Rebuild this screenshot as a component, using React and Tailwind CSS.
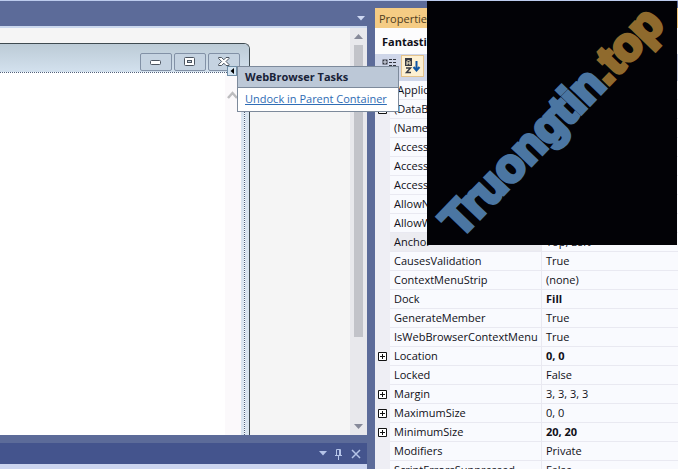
import React from "react";

const rows = [
  ["(ApplicationSettings)", "", "plus"],
  ["(DataBindings)", "", "plus"],
  ["(Name)", "webBrowser1"],
  ["AccessibleDescription", ""],
  ["AccessibleName", ""],
  ["AccessibleRole", "Default"],
  ["AllowNavigation", "True"],
  ["AllowWebBrowserDrop", "True"],
  ["Anchor", "Top, Left", "selected"],
  ["CausesValidation", "True"],
  ["ContextMenuStrip", "(none)"],
  ["Dock", "Fill", "bold"],
  ["GenerateMember", "True"],
  ["IsWebBrowserContextMenu", "True"],
  ["Location", "0, 0", "plus bold"],
  ["Locked", "False"],
  ["Margin", "3, 3, 3, 3", "plus"],
  ["MaximumSize", "0, 0", "plus"],
  ["MinimumSize", "20, 20", "plus bold"],
  ["Modifiers", "Private"],
  ["ScriptErrorsSuppressed", "False"],
];

function CaptionButton({ label, children }) {
  return (
    <button
      aria-label={label}
      className="flex h-[18px] w-8 items-center justify-center rounded-[2px] border border-[#8291a6] bg-[#c5d3e1]"
    >
      {children}
    </button>
  );
}

function FormWindow() {
  return (
    <div className="flex h-full w-[250px] flex-col overflow-hidden rounded-tr-[6px] border-t border-r border-[#3e4a50] bg-[#d9e5f0]">
      <div className="flex h-7 shrink-0 items-end justify-end gap-[2px] bg-linear-to-b from-[#bccbd6] to-[#d3e1ee] pr-[9px] pb-px">
        <CaptionButton label="Minimize">
          <svg width="12" height="6" viewBox="0 0 12 6" className="mt-[2px]">
            <rect x="0.5" y="0.5" width="10" height="4" rx="1" fill="#fff" stroke="#4c5560" />
          </svg>
        </CaptionButton>
        <CaptionButton label="Maximize">
          <svg width="12" height="10" viewBox="0 0 12 10">
            <rect x="0.5" y="0.5" width="10" height="8" rx="1" fill="#fff" stroke="#4c5560" />
            <rect x="3.5" y="3.5" width="4" height="2" fill="#c5d3e1" stroke="#4c5560" />
          </svg>
        </CaptionButton>
        <CaptionButton label="Close">
          <svg width="12" height="10" viewBox="0 0 12 10">
            <path
              d="M.6.5h3l2.200 2.300L8 .5h3v1L8 4.500l3 3v1H8L5.800 6.200 3.600 8.500h-3v-1l3-3-3-3z"
              fill="#fff"
              stroke="#4c5560"
            />
          </svg>
        </CaptionButton>
      </div>
      <div className="flex min-h-0 flex-1 pr-[4px]">
        <div className="flex min-w-0 flex-1 border-t border-r border-dotted border-[#51617c] bg-white">
          <div className="flex-1" />
          <div className="w-[16px] bg-[#fbf9fb] pt-[17px]">
            <svg width="14" height="10" viewBox="0 0 14 10" className="ml-[2px]">
              <path d="M1 8 5.500 3 10 8" fill="none" stroke="#bdbdbf" strokeWidth="2.500" />
            </svg>
          </div>
          <div className="w-[3px] bg-[#d9e5f0]" />
        </div>
      </div>
    </div>
  );
}

function Designer() {
  return (
    <div className="flex min-h-0 flex-1 border-t-2 border-[#cbd8ee] bg-[#f5f5f5]">
      <div className="min-w-0 flex-1 pt-[15px]">
        <FormWindow />
      </div>
      <div className="flex w-[17px] shrink-0 flex-col items-center bg-[#e8e8ec]">
        <svg width="9" height="5" viewBox="0 0 9 5" className="mt-[6px]">
          <path d="M4.500 0 9 5H0z" fill="#868999" />
        </svg>
        <div className="mt-[6px] h-[292px] w-[9px] bg-[#c2c3c9]" />
        <svg width="9" height="5" viewBox="0 0 9 5" className="mt-auto mb-[6px]">
          <path d="M0 0h9L4.500 5z" fill="#868999" />
        </svg>
      </div>
    </div>
  );
}

function TasksPopup() {
  return (
    <div className="absolute top-[65px] left-[237px] w-[162px] border border-[#7d8a9b] bg-white">
      <div className="h-[21px] border-b border-[#7d8a9b] bg-[#bcc8d7] pl-[7px] text-[11px] leading-5 font-bold text-[#182238]">
        WebBrowser Tasks
      </div>
      <div className="h-[23px] pl-[7px] text-[11px] leading-[22px] whitespace-nowrap">
        <a href="#undock" className="text-[#2f6db5] underline">
          Undock in Parent Container
        </a>
      </div>
      <button
        aria-label="Close tasks"
        className="absolute top-[-1px] left-[-11px] flex h-[10px] w-[10px] items-center justify-center border border-[#7290a8] bg-[#d5e5f2]"
      >
        <svg width="5" height="6" viewBox="0 0 5 6" className="shrink-0">
          <path d="M4 0v6L.500 3z" fill="#000" />
        </svg>
      </button>
    </div>
  );
}

function ToolWindowBar() {
  return (
    <div className="flex h-[21px] shrink-0 items-center justify-end gap-2 bg-[#44548d] pr-[6px] text-[#b5c4e8]">
      <button aria-label="Window position">
        <svg width="8" height="5" viewBox="0 0 8 5">
          <path d="M0 0h8L4 4.500z" fill="currentColor" />
        </svg>
      </button>
      <button aria-label="Auto hide">
        <svg width="8" height="12" viewBox="0 0 8 12">
          <path d="M1.500 7V1.500h4V7M4.500 1.500V7M0 7.500h7M3.500 8v4" fill="none" stroke="currentColor" />
        </svg>
      </button>
      <button aria-label="Close">
        <svg width="10" height="10" viewBox="0 0 10 10">
          <path d="m1 1 8 8M9 1 1 9" stroke="currentColor" strokeWidth="1.500" />
        </svg>
      </button>
    </div>
  );
}

function ExpandButton({ label }) {
  return (
    <button aria-label={"Expand " + label}>
      <svg width="9" height="9" viewBox="0 0 9 9">
        <path d="M.5.5h8v8h-8zM2 4.500h5M4.500 2v5" fill="#fff" stroke="#111" />
      </svg>
    </button>
  );
}

function PropertyTable() {
  return (
    <table className="w-full table-fixed border-collapse text-[11px] text-[#101018]">
      <colgroup>
        <col className="w-[15px]" />
        <col className="w-[152px]" />
        <col />
      </colgroup>
      <tbody>
        {rows.map(([name, value, kind = ""]) => (
          <tr key={name} className="h-[19px]">
            <td className="bg-[#eeeef4] p-0">
              <div className="flex h-[19px] items-center justify-center">
                {kind.includes("plus") && <ExpandButton label={name} />}
              </div>
            </td>
            <td className={kind === "selected" ? "bg-[#ececf1] p-0" : "bg-[#f9fafe] p-0"}>
              <div className="h-[19px] overflow-hidden border-r border-b border-[#e9e9f1] pl-1 leading-[18px] whitespace-nowrap">
                {name}
              </div>
            </td>
            <td className="bg-[#f9fafe] p-0">
              <div
                className={
                  kind.includes("bold")
                    ? "h-[19px] overflow-hidden border-b border-[#e9e9f1] pl-1 leading-[18px] font-bold whitespace-nowrap"
                    : "h-[19px] overflow-hidden border-b border-[#e9e9f1] pl-1 leading-[18px] whitespace-nowrap"
                }
              >
                {value}
              </div>
            </td>
          </tr>
        ))}
      </tbody>
    </table>
  );
}

function PropertiesPanel() {
  return (
    <aside className="flex w-[303px] shrink-0 flex-col overflow-hidden pt-[7px]">
      <div className="h-5 shrink-0 bg-[#f5cc84] pl-1 text-[11px] leading-[21px] text-[#4d3b1c]">Properties</div>
      <div className="h-[26px] shrink-0 bg-[#fcfcfd] pl-[7px] text-[11px] leading-[27px] font-bold text-[#101018]">
        Fantastic
      </div>
      <div className="flex h-[27px] shrink-0 items-start gap-1 bg-[#cfd6e9] pt-px pl-[7px]">
        <button aria-label="Categorized" className="mt-[3px]">
          <svg width="15" height="14" viewBox="0 0 15 14">
            <path d="M.5 1.500h5v5h-5z" fill="#333640" />
            <path d="M1 4h4M3 2v4" stroke="#dfe4f2" />
            <path d="M7 1.500h3M11 1.500h3M7 4.500h3M11 4.500h3M7 7.500h3M11 7.500h3" stroke="#333640" />
            <path d="M0 9.500h6M7 10.500h3M11 10.500h3" stroke="#333640" />
          </svg>
        </button>
        <button
          aria-label="Alphabetical"
          className="flex h-[22px] w-[23px] items-center justify-center border border-[#e5c38b] bg-[#fdf0d2]"
        >
          <svg width="17" height="16" viewBox="0 0 17 16" className="shrink-0">
            <path d="M1 0h7v8H1z" fill="#353842" />
            <path d="M3 7V3.500L4.500 2 6 3.500V7M3 5h3" fill="none" stroke="#fdf2cf" />
            <path d="M2 10h4.500L2.500 14.500H7" fill="none" stroke="#353842" strokeWidth="1.500" />
            <path d="M12.500 3v9M9.500 9l3 3.500 3-3.500" fill="none" stroke="#0e55a5" strokeWidth="2" />
          </svg>
        </button>
      </div>
      <PropertyTable />
    </aside>
  );
}

function Watermark() {
  return (
    <div className="absolute top-0 right-px h-[244px] w-[250px] bg-[#020206]">
      <svg width="250" height="244" viewBox="0 0 250 244">
        <text
          transform="translate(33 238) rotate(-46)"
          className="font-['Liberation_Sans',sans-serif] text-[46px] font-bold"
          strokeWidth="4"
        >
          <tspan fill="#4b76a2" stroke="#4b76a2">Truongtin</tspan>
          <tspan fill="#8f6a2d" stroke="#8f6a2d">.top</tspan>
        </text>
      </svg>
    </div>
  );
}

export default function App() {
  return (
    <div className="relative flex h-screen overflow-hidden border-t border-[#bccbed] bg-[#5c6b99] font-['Open_Sans','Noto_Sans',sans-serif]">
      <main className="mr-2 flex min-w-0 flex-1 flex-col">
        <div className="flex h-[25px] shrink-0 items-center justify-end pt-[9px] pr-[2px]">
          <button aria-label="Open documents">
            <svg width="8" height="5" viewBox="0 0 8 5">
              <path d="M0 0h8L4 4.500z" fill="#ced8f2" />
            </svg>
          </button>
        </div>
        <Designer />
        <div className="h-2 shrink-0" />
        <ToolWindowBar />
        <div className="h-[5px] shrink-0 bg-[#ccd5f0]" />
      </main>
      <PropertiesPanel />
      <TasksPopup />
      <Watermark />
    </div>
  );
}
